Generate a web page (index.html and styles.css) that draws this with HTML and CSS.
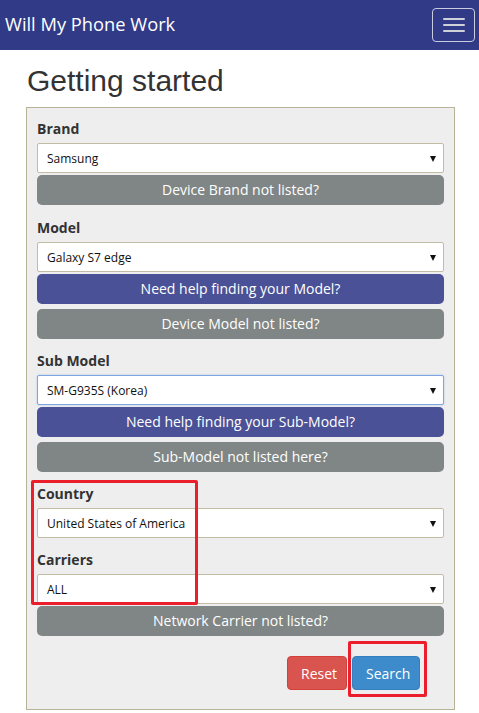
FILE: index.html
```html
<!DOCTYPE html>
<html lang="en">
<head>
<meta charset="utf-8">
<title>Will My Phone Work</title>
<link rel="stylesheet" href="styles.css">
</head>
<body>
<nav class="navbar">
  <span class="brand">Will My Phone Work</span>
  <button class="toggle" type="button" aria-label="Menu">
    <span class="bar"></span><span class="bar"></span><span class="bar"></span>
  </button>
</nav>
<main class="container">
  <h1 class="title">Getting started</h1>
  <form class="panel">
    <div class="group group-first">
      <label class="label">Brand</label>
      <div class="select"><span>Samsung</span></div>
      <button type="button" class="btn btn-gray">Device Brand not listed?</button>
    </div>
    <div class="group">
      <label class="label">Model</label>
      <div class="select"><span>Galaxy S7 edge</span></div>
      <button type="button" class="btn btn-blue">Need help finding your Model?</button>
      <button type="button" class="btn btn-gray btn-gap">Device Model not listed?</button>
    </div>
    <div class="group">
      <label class="label">Sub Model</label>
      <div class="select focus"><span>SM-G935S (Korea)</span></div>
      <button type="button" class="btn btn-blue">Need help finding your Sub-Model?</button>
      <button type="button" class="btn btn-gray btn-gap">Sub-Model not listed here?</button>
    </div>
    <div class="highlight-wrap">
      <div class="group">
        <label class="label">Country</label>
        <div class="select"><span>United States of America</span></div>
      </div>
      <div class="group group-last">
        <label class="label">Carriers</label>
        <div class="select"><span>ALL</span></div>
      </div>
      <div class="highlight hl-country"></div>
    </div>
    <button type="button" class="btn btn-gray">Network Carrier not listed?</button>
    <div class="actions">
      <button type="button" class="act act-reset">Reset</button>
      <span class="search-wrap">
        <button type="button" class="act act-search">Search</button>
        <span class="highlight hl-search"></span>
      </span>
    </div>
  </form>
</main>
</body>
</html>
```

FILE: styles.css
```css
* { box-sizing: border-box; }
html, body { margin: 0; padding: 0; background: #fff; }
body { font-family: "Open Sans", "Noto Sans", sans-serif; color: #333; }

.navbar {
  height: 50px;
  background: #313a87;
  display: flex;
  align-items: center;
  justify-content: space-between;
  padding: 0 4px 0 5px;
}
.brand {
  color: #fff;
  font-size: 18.3px;
  line-height: 20px;
  margin-top: -2px;
}
.toggle {
  width: 43px;
  height: 34px;
  margin-top: -1px;
  border: 1px solid #c9cbe0;
  border-radius: 4px;
  background: transparent;
  display: flex;
  flex-direction: column;
  align-items: center;
  justify-content: center;
  gap: 4px;
  padding: 0;
}
.bar { display: block; width: 22px; height: 2px; background: #cfd0d8; border-radius: 1px; }

.container { padding: 0 24px 0 26px; }
.title {
  font-family: "Liberation Sans", Arial, sans-serif;
  font-weight: normal;
  font-size: 30px;
  line-height: 33px;
  margin: 14px 0 10px 1px;
  color: #333;
}
.panel {
  background: #eee;
  border: 1px solid #b8b296;
  padding: 11px 10px 19px 10px;
  display: flex;
  flex-direction: column;
}
.group { display: flex; flex-direction: column; margin-bottom: 12px; }
.group-first { margin-bottom: 13px; }
.group-last { margin-bottom: 0; }
.label {
  font-weight: bold;
  font-size: 14px;
  line-height: 20px;
  margin-bottom: 4px;
  color: #333;
}
.select {
  position: relative;
  height: 30px;
  background: #fff;
  border: 1px solid #c2bca5;
  border-radius: 2px;
  display: flex;
  align-items: center;
  padding: 0 20px 0 9px;
  font-size: 12px;
  color: #111;
}
.select::after {
  content: "";
  position: absolute;
  right: 7px;
  top: 12px;
  border-left: 3px solid transparent;
  border-right: 3px solid transparent;
  border-top: 6px solid #111;
}
.select.focus { border-color: #7ea6e0; box-shadow: 0 0 2px rgba(102,150,233,0.5); }

.btn {
  height: 30px;
  margin-top: 2px;
  border: 0;
  border-radius: 5px;
  color: #fff;
  font-family: inherit;
  font-size: 14px;
  line-height: 30px;
  padding: 0;
  text-align: center;
  width: 100%;
}
.btn-gap { margin-top: 5px; }
.btn-gray { background: #808685; }
.btn-blue { background: #4a5196; }

.highlight-wrap { position: relative; display: flex; flex-direction: column; }
.highlight {
  position: absolute;
  border: 3px solid #ea1f2b;
  border-radius: 2px;
  pointer-events: none;
}
.hl-country { left: -6px; top: -4px; width: 167px; height: 125px; }

.actions {
  display: flex;
  justify-content: flex-end;
  gap: 5px;
  margin-top: 20px;
  padding-right: 24px;
}
.search-wrap { position: relative; display: flex; }
.hl-search { left: -4px; top: -15px; width: 79px; height: 56px; }
.act {
  height: 34px;
  border-radius: 4px;
  color: #fff;
  font-family: inherit;
  font-size: 14px;
  padding: 0 13px;
  border: 1px solid transparent;
}
.act-reset { background: #d9534f; border-color: #d43f3a; width: 60px; }
.act-search { background: #3d8bcb; border-color: #357ebd; width: 68px; }
```
